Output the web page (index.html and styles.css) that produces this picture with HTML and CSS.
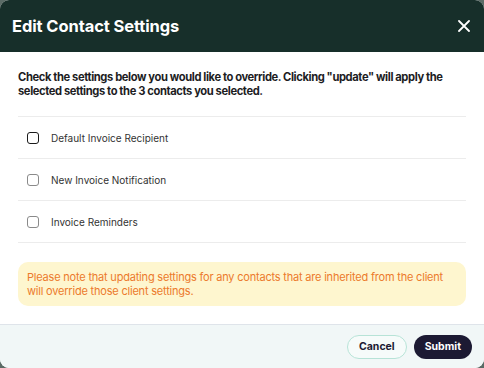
FILE: index.html
```html
<!DOCTYPE html>
<html lang="en">
<head>
    <meta charset="UTF-8">
    <title>Edit Contact Settings</title>
    <link rel="stylesheet" href="styles.css">
</head>
<body>
    <div class="modal">
        <div class="modal-header">
            <h1>Edit Contact Settings</h1>
            <button class="close-button" aria-label="Close">
                <svg width="12" height="12" viewBox="0 0 12 12"><path d="M1 1L11 11M11 1L1 11" stroke="#fff" stroke-width="1.8" stroke-linecap="round"/></svg>
            </button>
        </div>
        <div class="modal-body">
            <p class="intro">Check the settings below you would like to override. Clicking "update" will apply the selected settings to the 3 contacts you selected.</p>
            <div class="setting-list">
                <label class="setting-row"><span class="checkbox focused"></span>Default Invoice Recipient</label>
                <label class="setting-row"><span class="checkbox"></span>New Invoice Notification</label>
                <label class="setting-row"><span class="checkbox"></span>Invoice Reminders</label>
            </div>
            <div class="notice">Please note that updating settings for any contacts that are inherited from the client will override those client settings.</div>
        </div>
        <div class="modal-footer">
            <button class="btn btn-cancel">Cancel</button>
            <button class="btn btn-submit">Submit</button>
        </div>
    </div>
</body>
</html>
```

FILE: styles.css
```css
html, body {
    margin: 0;
    height: 100%;
}
body {
    background-color: #5b6b66;
    font-family: Inter, "Noto Sans", sans-serif;
    color: #222;
}
.modal {
    height: 100%;
    display: flex;
    flex-direction: column;
    background-color: #fff;
    border-radius: 9px;
    overflow: hidden;
}
.modal-header {
    height: 52px;
    flex: none;
    display: flex;
    align-items: center;
    justify-content: space-between;
    padding: 0 14px 0 12px;
    background-color: #172f2a;
}
.modal-header h1 {
    margin: 0;
    font-size: 16.5px;
    font-weight: 700;
    color: #fff;
    letter-spacing: -0.1px;
}
.close-button {
    border: none;
    background: none;
    padding: 0;
    display: flex;
    cursor: pointer;
}
.modal-body {
    flex: 1;
    padding: 18px 18px 0;
}
.intro {
    margin: 0 0 18px;
    font-size: 11.2px;
    line-height: 14px;
    font-weight: 700;
    letter-spacing: -0.4px;
    color: #1d1d1f;
}
.setting-list {
    border-top: 1px solid #ececec;
}
.setting-row {
    height: 41px;
    display: flex;
    align-items: center;
    border-bottom: 1px solid #ececec;
    font-size: 10px;
    color: #333;
    cursor: pointer;
}
.checkbox {
    width: 10px;
    height: 10px;
    margin: 0 12px 0 9px;
    border: 1.5px solid #8a8a8a;
    border-radius: 3px;
}
.checkbox.focused {
    border-color: #1a1a1a;
}
.notice {
    margin-top: 19px;
    padding: 8px 9px;
    background-color: #fef6cf;
    border-radius: 10px;
    font-size: 11px;
    line-height: 14px;
    letter-spacing: -0.2px;
    color: #ec7a2c;
}
.modal-footer {
    height: 43px;
    flex: none;
    display: flex;
    align-items: center;
    justify-content: flex-end;
    gap: 7px;
    padding: 0 12px;
    background-color: #f1f7f7;
    border-top: 1px solid #dfe4ea;
}
.btn {
    height: 24px;
    padding: 0 11px;
    border-radius: 12px;
    font-family: inherit;
    font-size: 10.5px;
    font-weight: 700;
    cursor: pointer;
}
.btn-cancel {
    background-color: #f6fbfa;
    border: 1.5px solid #b7e3d7;
    color: #1c1a33;
}
.btn-submit {
    background-color: #1c1a33;
    border: none;
    color: #fff;
}
```
